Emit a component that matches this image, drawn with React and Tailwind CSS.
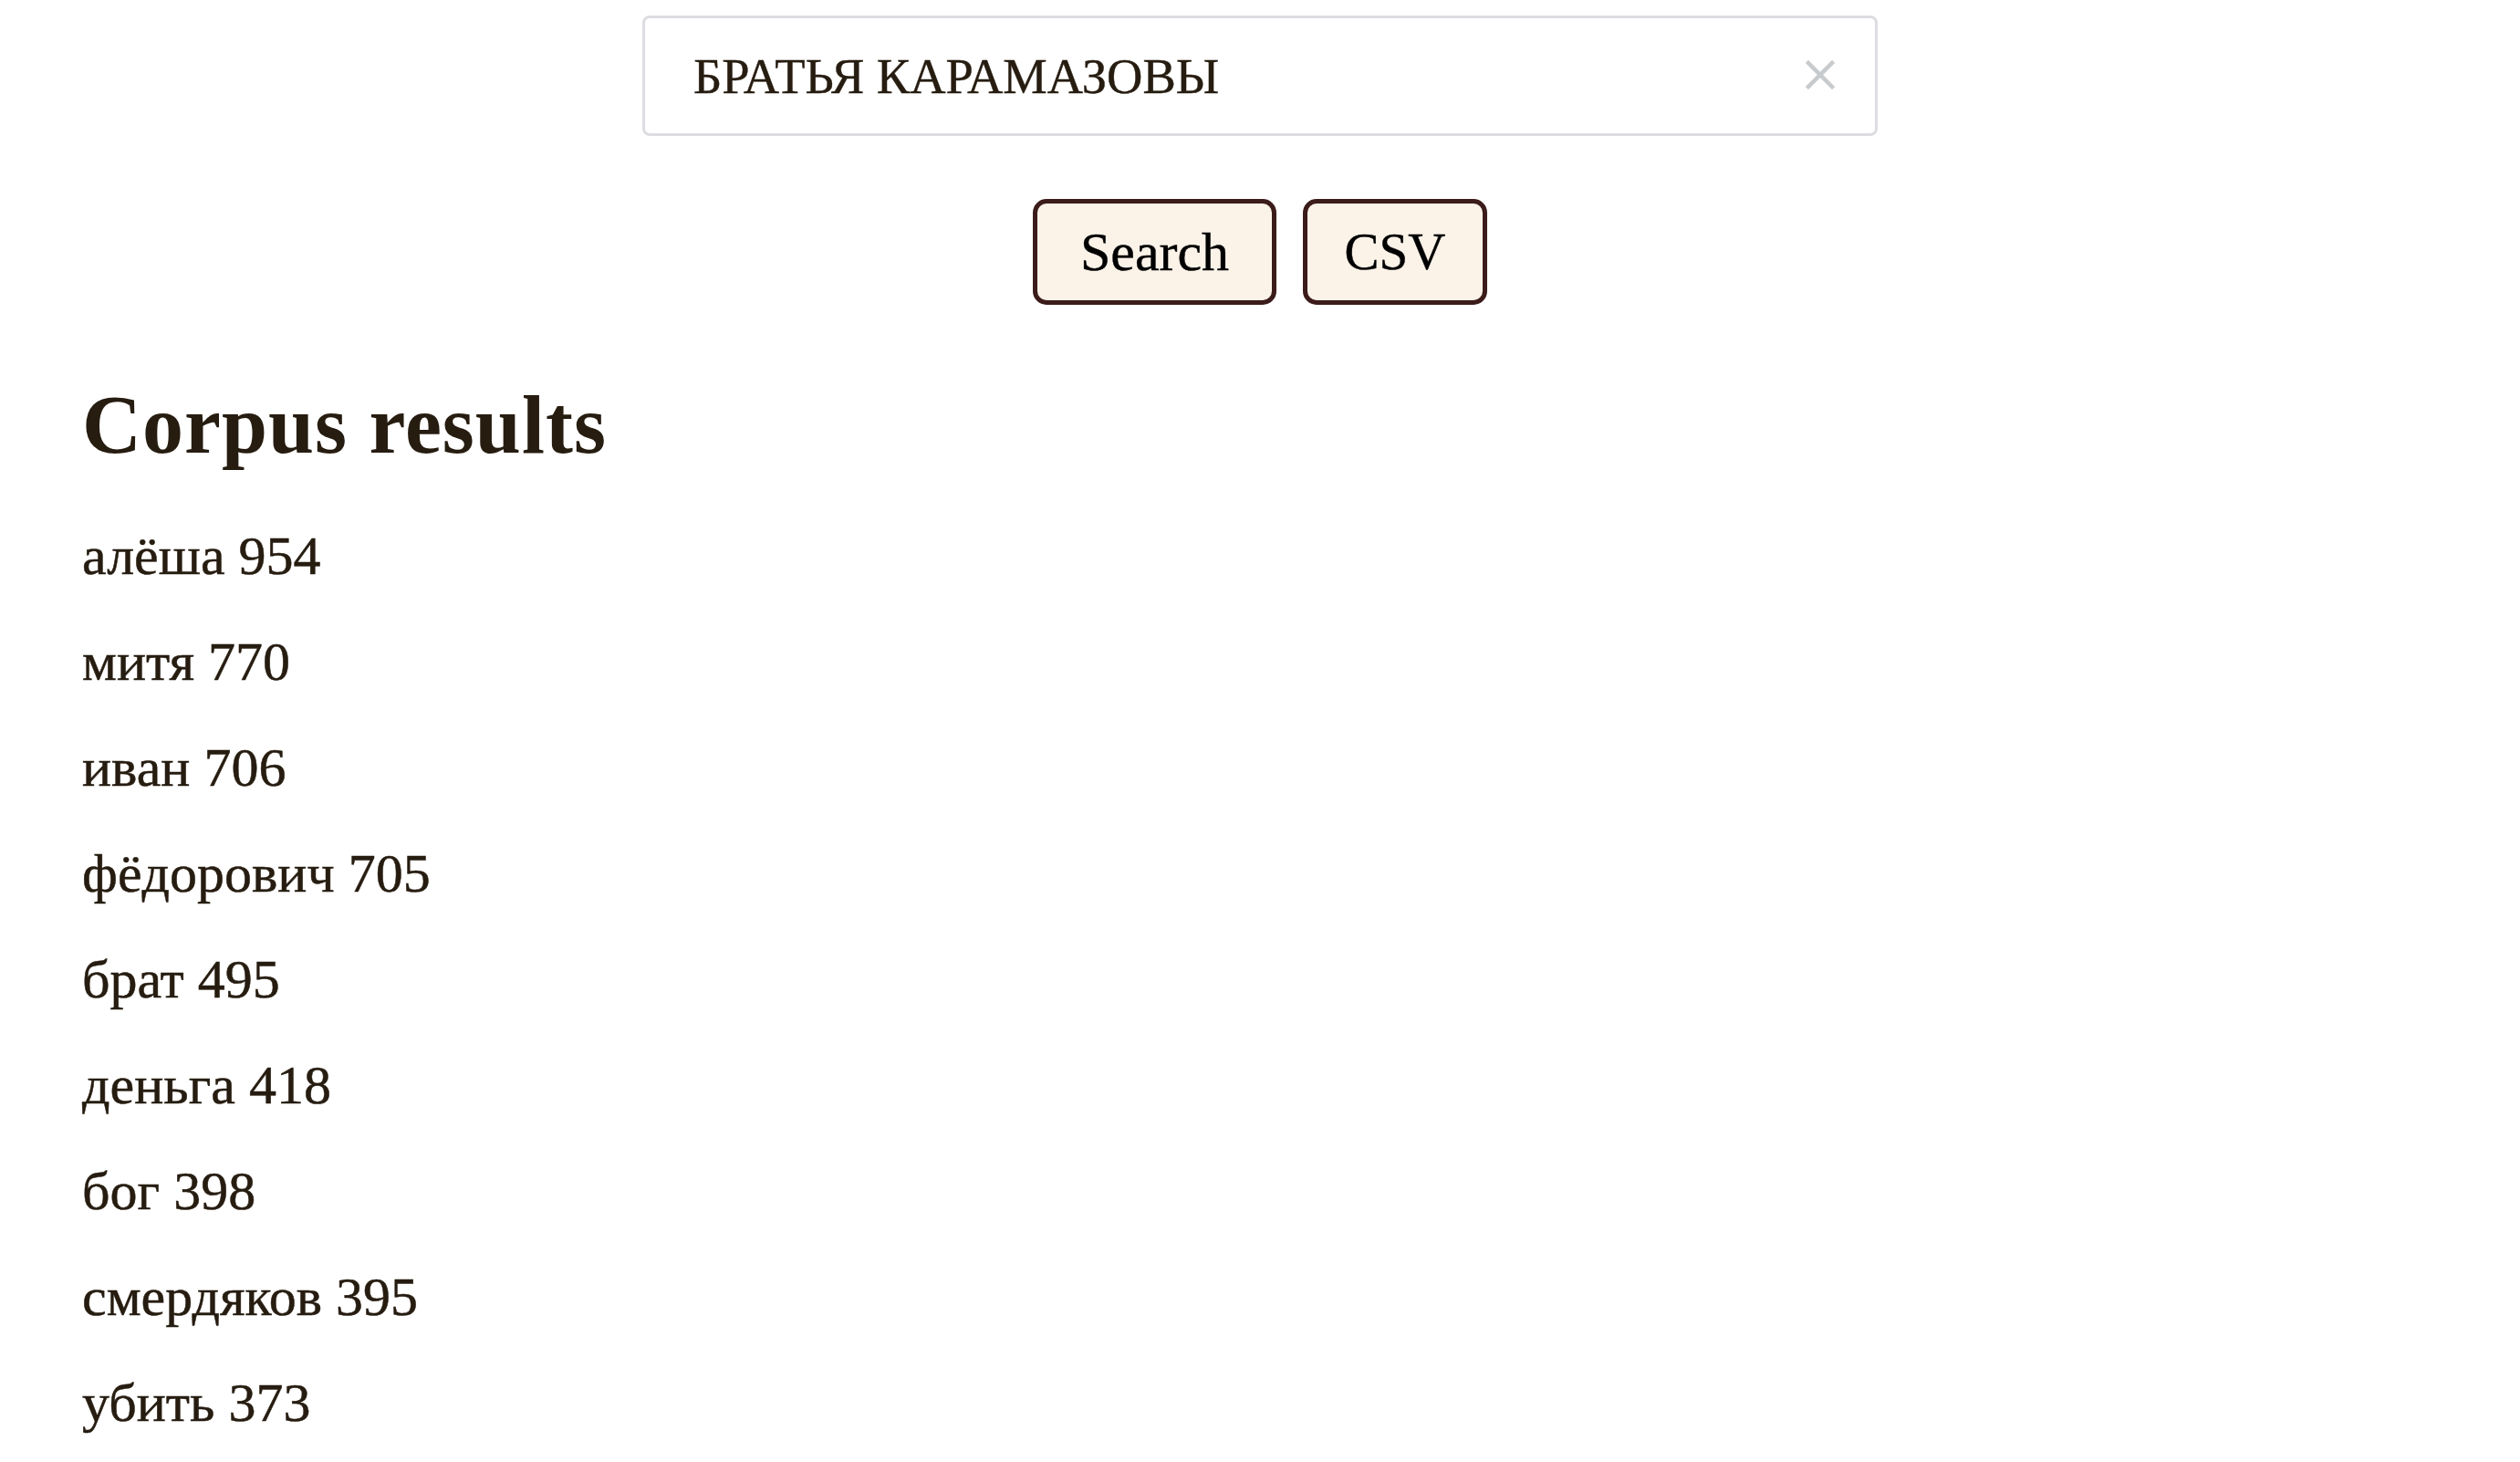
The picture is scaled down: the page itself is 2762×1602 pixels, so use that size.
import React from 'react';

const results = [
  { word: 'алёша', count: 954 },
  { word: 'митя', count: 770 },
  { word: 'иван', count: 706 },
  { word: 'фёдорович', count: 705 },
  { word: 'брат', count: 495 },
  { word: 'деньга', count: 418 },
  { word: 'бог', count: 398 },
  { word: 'смердяков', count: 395 },
  { word: 'убить', count: 373 },
];

const ClearIcon = () => (
  <svg width="34" height="34" viewBox="0 0 34 34" className="text-[#c8cbce]">
    <path d="M4 4 L30 30 M30 4 L4 30" stroke="currentColor" strokeWidth="4.5" strokeLinecap="square" />
  </svg>
);

const App = () => (
  <div className="min-h-screen bg-white text-[#261c10] font-['Liberation_Serif',serif] pt-[17px] px-[90px] pb-10">
    <div className="flex justify-center">
      <div className="relative w-[1354px]">
        <input
          defaultValue="БРАТЬЯ КАРАМАЗОВЫ"
          className="w-full h-[132px] border-[3px] border-[#dcdde0] rounded-[8px] pl-[53px] pr-[90px] text-[54.5px] text-[#261c10] outline-none bg-white [-webkit-text-stroke:0.4px]"
        />
        <button className="absolute right-[46px] top-[48px] flex items-center justify-center">
          <ClearIcon />
        </button>
      </div>
    </div>

    <div className="flex justify-center gap-[29px] mt-[69px]">
      <button className="w-[267px] border-[5px] border-[#3b1c1a] rounded-[15px] bg-[#fbf2e8] py-[21px] text-[60px] leading-[64px] text-black [-webkit-text-stroke:0.4px]">
        Search
      </button>
      <button className="w-[202px] border-[5px] border-[#3b1c1a] rounded-[15px] bg-[#fbf2e8] py-[21px] text-[57px] leading-[64px] text-black [-webkit-text-stroke:0.4px]">
        CSV
      </button>
    </div>

    <h2 className="mt-[79px] text-[90px] font-bold leading-[106px] tracking-[1px]">Corpus results</h2>

    <div className="mt-[32px]">
      {results.map((r) => (
        <p key={r.word} className="text-[60px] leading-[116px] [-webkit-text-stroke:0.5px]">
          {r.word} {r.count}
        </p>
      ))}
    </div>
  </div>
);

export default App;
